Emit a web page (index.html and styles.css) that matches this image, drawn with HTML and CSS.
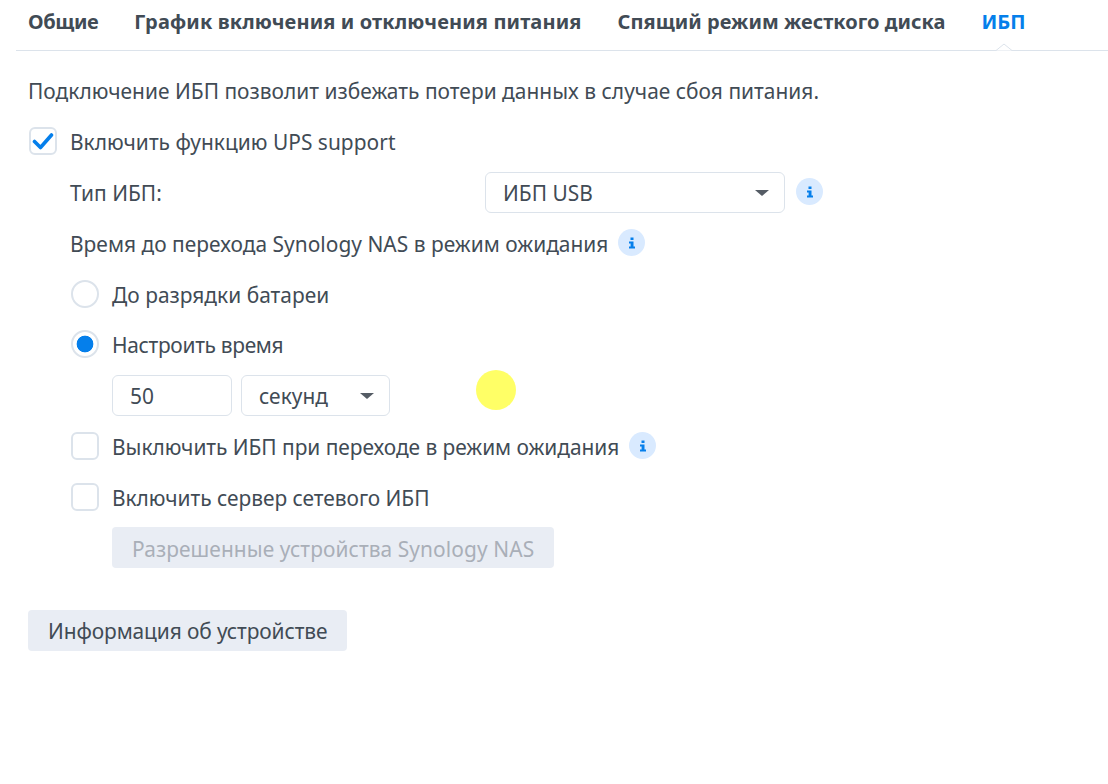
FILE: index.html
```html
<!DOCTYPE html>
<html lang="ru">
<head>
<meta charset="utf-8">
<title>ИБП</title>
<link rel="stylesheet" href="styles.css">
</head>
<body>
<nav class="tabs">
  <span class="tab tab-first">Общие</span>
  <span class="tab tab-wide">График включения и отключения питания</span>
  <span class="tab tab-disk">Спящий режим жесткого диска</span>
  <span class="tab active">ИБП<svg class="notch" width="18" height="8" viewBox="0 0 18 8"><path d="M0 7.500H1L9 1l8 6.500H18" fill="#fff" stroke="#dce3eb"/></svg></span>
</nav>
<main class="content">
  <p class="row"><span class="lbl">Подключение ИБП позволит избежать потери данных в случае сбоя питания.</span></p>
  <div class="row">
    <span class="check on"><svg width="22" height="18" viewBox="0 0 22 18"><path d="M2.500 9.500l6 6L19.500 3" fill="none" stroke="#057feb" stroke-width="3.600" stroke-linecap="round" stroke-linejoin="round"/></svg></span>
    <span class="lbl">Включить функцию UPS support</span>
  </div>
  <div class="row level1">
    <span class="lbl field-label">Тип ИБП:</span>
    <span class="select wide">ИБП USB<i class="caret"></i></span>
    <span class="info info-near"><svg width="8" height="12" viewBox="0 0 8 12"><path d="M2.500 0.500h3v2.500h-3zM1 4.500h4.500v5H7v2H1v-2h1.600v-3H1z" fill="#057feb"/></svg></span>
  </div>
  <div class="row level1">
    <span class="lbl">Время до перехода Synology NAS в режим ожидания</span>
    <span class="info"><svg width="8" height="12" viewBox="0 0 8 12"><path d="M2.500 0.500h3v2.500h-3zM1 4.500h4.500v5H7v2H1v-2h1.600v-3H1z" fill="#057feb"/></svg></span>
  </div>
  <div class="row level1">
    <span class="radio"></span>
    <span class="lbl">До разрядки батареи</span>
  </div>
  <div class="row level1">
    <span class="radio on"></span>
    <span class="lbl tight">Настроить время</span>
  </div>
  <div class="row level2">
    <span class="input">50</span>
    <span class="select short">секунд<i class="caret"></i></span>
  </div>
  <div class="row level1">
    <span class="check"></span>
    <span class="lbl slight">Выключить ИБП при переходе в режим ожидания</span>
    <span class="info"><svg width="8" height="12" viewBox="0 0 8 12"><path d="M2.500 0.500h3v2.500h-3zM1 4.500h4.500v5H7v2H1v-2h1.600v-3H1z" fill="#057feb"/></svg></span>
  </div>
  <div class="row level1">
    <span class="check"></span>
    <span class="lbl slight">Включить сервер сетевого ИБП</span>
  </div>
  <div class="row level2">
    <button class="btn disabled" type="button">Разрешенные устройства Synology NAS</button>
  </div>
  <div class="row footer-row">
    <button class="btn info-btn" type="button">Информация об устройстве</button>
  </div>
</main>
<div class="cursor-dot"></div>
</body>
</html>
```
FILE: styles.css
```css
* { box-sizing: border-box; }
html, body { margin: 0; padding: 0; }
body {
  background: #fff;
  color: #414b55;
  font-family: "Noto Sans", sans-serif;
  font-size: 20.9px;
  letter-spacing: 0.03px;
  position: relative;
  height: 784px;
  overflow: hidden;
}
.tabs {
  display: flex;
  gap: 36px;
  height: 51px;
  margin-left: 16px;
  padding: 8px 0 0 12px;
  border-bottom: 1px solid #dce3eb;
}
.tab { font-weight: 700; font-size: 20px; line-height: 28px; white-space: nowrap; letter-spacing: 0; }
.tab-first { letter-spacing: -0.4px; }
.tab-wide { letter-spacing: 0.13px; }
.tab-disk { letter-spacing: 0.04px; }
.tab.active { color: #057feb; position: relative; }
.notch {
  position: absolute;
  left: 50%;
  margin-left: -9px;
  top: 35px;
}
.content {
  display: flex;
  flex-direction: column;
  gap: 10px;
  padding: 19px 0 0 28px;
}
.row {
  display: flex;
  align-items: center;
  height: 40.8px;
  margin: 0;
  white-space: nowrap;
}
.lbl { padding-top: 2px; }
.tight { letter-spacing: -0.3px; }
.slight { letter-spacing: -0.03px; }
.level1 { padding-left: 42px; }
.level2 { padding-left: 84px; }
.footer-row { margin-top: 32px; }
.check {
  width: 28px;
  height: 28px;
  flex: none;
  margin: 0 13px 0 1px;
  border: 2px solid #dce3eb;
  border-radius: 6px;
  background: #fff;
  display: flex;
  align-items: center;
  justify-content: center;
}
.radio {
  width: 28px;
  height: 28px;
  flex: none;
  margin: 0 13px 0 1px;
  border: 2px solid #dce3eb;
  border-radius: 50%;
  background: #fff;
}
.radio.on { background: radial-gradient(circle, #057feb 0, #057feb 8px, #fff 8.7px); }
.field-label { width: 415px; }
.select, .input {
  display: flex;
  align-items: center;
  height: 41px;
  border: 1px solid #dce3eb;
  border-radius: 6px;
  background: #fff;
  padding: 2px 0 0 17px;
  position: relative;
}
.select.wide { width: 300px; }
.select.short { width: 149px; margin-left: 9px; }
.input { width: 120px; }
.caret {
  position: absolute;
  right: 15px;
  top: 17px;
  width: 0;
  height: 0;
  border-left: 7px solid transparent;
  border-right: 7px solid transparent;
  border-top: 6px solid #555c65;
}
.info {
  width: 27px;
  height: 27px;
  flex: none;
  margin-left: 10px;
  border-radius: 50%;
  background: #d9eaff;
  display: flex;
  align-items: center;
  justify-content: center;
}
.info-near { margin-left: 11px; }
.btn {
  height: 41px;
  padding: 2px 20px 0;
  border: 0;
  border-radius: 4px;
  background: #e9edf4;
  color: #414b55;
  font: inherit;
}
.btn.disabled { color: #a9afb8; letter-spacing: 0.09px; }
.btn.info-btn { width: 319px; letter-spacing: -0.1px; white-space: nowrap; }
.cursor-dot {
  position: absolute;
  left: 476px;
  top: 370px;
  width: 40px;
  height: 40px;
  border-radius: 50%;
  background: #ffff66;
}
```
